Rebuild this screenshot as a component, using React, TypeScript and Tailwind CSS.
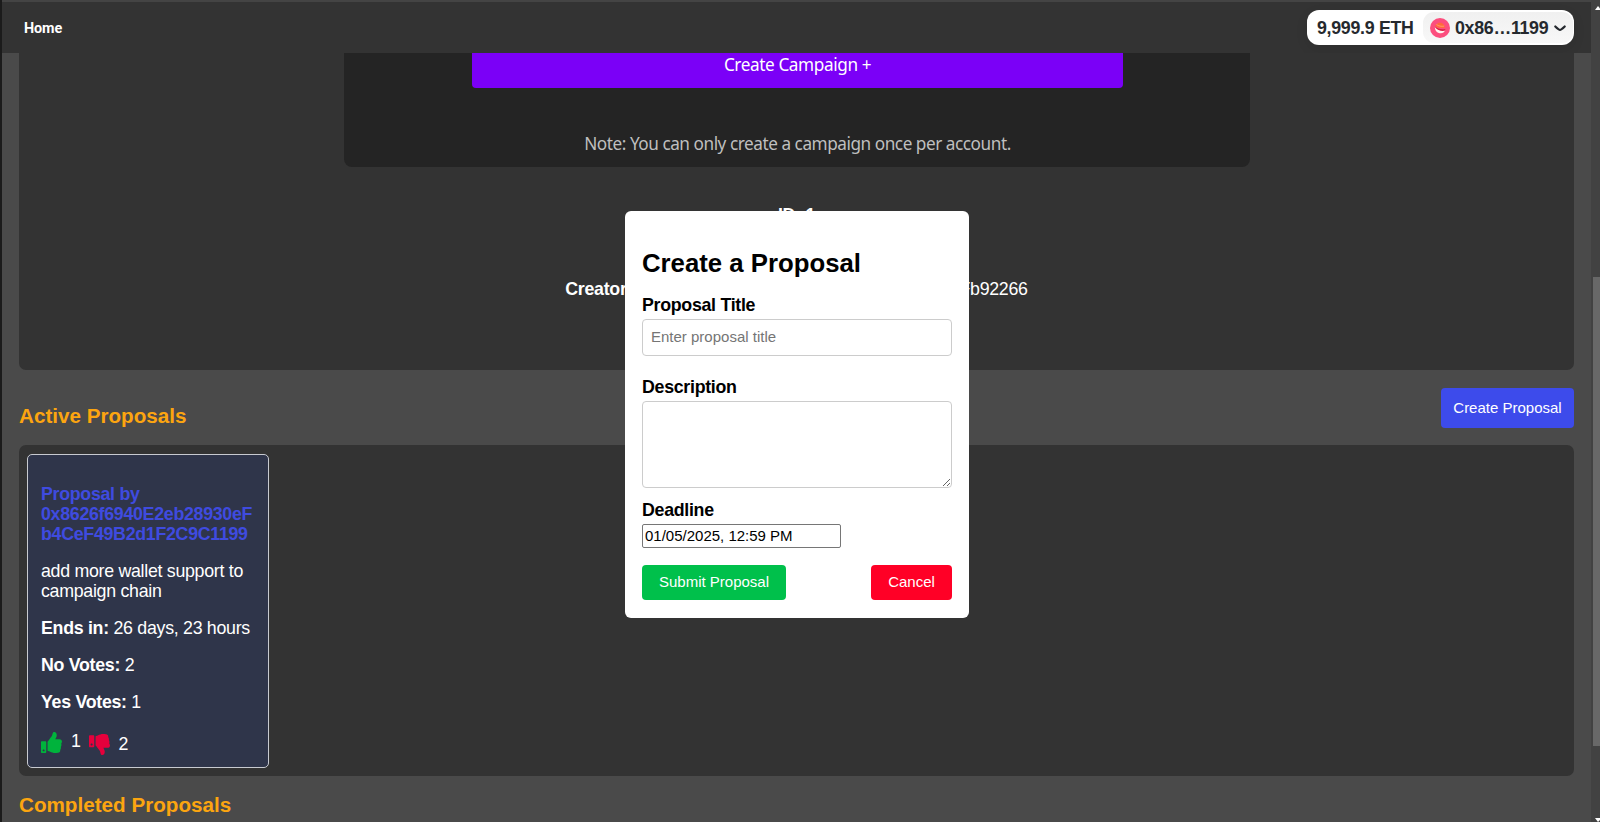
import React from "react";
import { FaThumbsUp, FaThumbsDown } from "react-icons/fa";

function Header() {
  return (
    <header className="flex h-[51px] shrink-0 items-center justify-between bg-[#333333] pl-[22px] pr-[17px]">
      <a className="mt-[3px] font-[Roboto] text-[14.4px] font-bold leading-4 tracking-[-0.1px] text-white">Home</a>
      <div className="flex h-[35px] items-center rounded-[12px] bg-white text-[17.8px] font-bold tracking-[-0.29px] text-[#25292e] shadow-[0_4px_12px_rgba(0,0,0,0.1)]">
        <span className="w-[116px] whitespace-nowrap pl-[10px] pt-px">9,999.9 ETH</span>
        <div className="mr-px flex h-[31px] w-[150px] items-center rounded-[11px] bg-linear-to-b from-[#f0f0f0] to-[#f8f8f8] pl-[7px]">
          <svg className="mr-[5px] size-5 shrink-0" viewBox="0 0 20 20">
            <circle cx="10" cy="10" r="10" fill="#fc4e7e" />
            <path d="M5 7.500 8.500 4.800c3-.8 6 1.300 6.700 4.700-3 1.300-8.200.5-10.200-2Z" fill="#ff6a3c" />
            <path d="M6.500 6.500c2 1.500 5 2.300 7.700 1.600" stroke="#ffa27a" strokeWidth=".8" fill="none" />
            <path d="M4.800 9.200c2.500 2.800 7 4 10.300 3-.8 2.600-3.500 3.600-6.300 2.700-2.300-.8-3.800-2.800-4-5.700Z" fill="#fff3ee" />
            <path d="M4.800 8.300c2.500 2.400 6.500 3.600 10.600 2.600l-.5 1.700c-4 1-8.200-.7-10.100-4.300Z" fill="#d81f45" />
          </svg>
          <span className="whitespace-nowrap pt-px">0x86…1199</span>
          <svg className="ml-[6px] mt-px shrink-0" width="12" height="7" viewBox="0 0 12 7" fill="none" stroke="#25292e" strokeWidth="2.200" strokeLinecap="round" strokeLinejoin="round">
            <path d="M1.300 1.500Q4.800 4.900 6 4.900T10.700 1.500" />
          </svg>
        </div>
      </div>
    </header>
  );
}

function CampaignPanel() {
  return (
    <section className="flex h-[317px] shrink-0 flex-col items-center rounded-b-[7px] bg-[#333333]">
      <div className="flex h-[114px] w-[906px] flex-col items-center rounded-b-[8px] bg-[#242424] pl-[2px] font-['Noto_Sans',sans-serif] text-[17.2px] tracking-[-0.46px]">
        <button className="h-[35px] w-[651px] rounded-b-[4px] bg-[#7b00f7] pb-[11px] leading-6 tracking-[-0.4px] text-white">Create Campaign +</button>
        <p className="mt-[44px] leading-6 text-[#bfbfbf]">Note: You can only create a campaign once per account.</p>
      </div>
      <h3 className="mt-[36px] font-bold leading-6 text-white">ID: 1</h3>
      <p className="mt-[52px] whitespace-nowrap leading-5 tracking-[-0.29px] text-white">
        <b>Creator:</b> 0xf39Fd6e51aad88F6F4ce6aB8827279cffFb92266
      </p>
    </section>
  );
}

function ProposalCard() {
  return (
    <article className="flex h-[314px] w-[242px] flex-col rounded-[5px] border border-[#c8cad0] bg-[#2f354a] pl-[13px] pr-[10px] pt-[30.400px] leading-[19.75px] text-white">
      <h4 className="break-all font-bold text-[#3f4be0]">
        <span className="block">Proposal by</span>
        <span className="block">0x8626f6940E2eb28930eF</span>
        <span className="block">b4CeF49B2d1F2C9C1199</span>
      </h4>
      <p className="mt-[17.200px]">add more wallet support to campaign chain</p>
      <p className="mt-[17.300px] whitespace-nowrap"><b>Ends in:</b> 26 days, 23 hours</p>
      <p className="mt-[17.500px]"><b>No Votes:</b> 2</p>
      <p className="mt-[17.500px]"><b>Yes Votes:</b> 1</p>
      <div className="mt-[19.500px] flex items-start">
        <FaThumbsUp className="size-[21px] text-[#00b33c]" />
        <span className="ml-[9px]">1</span>
        <FaThumbsDown className="ml-[8px] mt-[1.400px] size-[21px] text-[#e6003c]" />
        <span className="ml-[9px] mt-[3px]">2</span>
      </div>
    </article>
  );
}

function ProposalDialog() {
  return (
    <div role="dialog" className="absolute left-[623px] top-[211px] flex h-[406.500px] w-[344px] flex-col rounded-[6px] bg-white px-[17px] pt-[37px] text-black">
      <h2 className="text-[25.75px] font-bold leading-[30px] tracking-normal">Create a Proposal</h2>
      <label className="mt-[16.500px] font-bold leading-5">Proposal Title</label>
      <input placeholder="Enter proposal title" className="mt-[4px] h-[37px] shrink-0 rounded-[4px] border border-[#cccccc] px-[8px] pb-[1px] text-[15px] tracking-normal placeholder:text-[#757575]" />
      <label className="mt-[21.500px] font-bold leading-5">Description</label>
      <textarea className="mt-[4px] h-[87px] shrink-0 resize rounded-[4px] border border-[#cccccc]" />
      <label className="mt-[12px] font-bold leading-5">Deadline</label>
      <input defaultValue="01/05/2025, 12:59 PM" className="mt-[4px] h-[24px] w-[199px] shrink-0 rounded-[2px] border border-[#767676] px-[2px] pb-[2px] text-[15px] tracking-normal" />
      <div className="mt-[17px] flex justify-between text-[15px] tracking-normal text-white">
        <button className="h-[35px] w-[144px] rounded-[4px] bg-[#00c04b]">Submit Proposal</button>
        <button className="h-[35px] w-[81px] rounded-[4px] bg-[#ff0026]">Cancel</button>
      </div>
    </div>
  );
}

function Scrollbar() {
  return (
    <div className="flex w-[9px] shrink-0 flex-col items-end bg-[#424242]">
      <svg className="mt-[6px]" width="5" height="4" viewBox="0 0 5 4"><path d="M0 4 3 0 5 2.500V4Z" fill="#fff" /></svg>
      <div className="mt-[267px] h-[469px] w-[7px] bg-[#686868]" />
      <svg className="mb-0 mt-auto" width="5" height="4" viewBox="0 0 5 4"><path d="M0 0H5V2L3 4Z" fill="#fff" /></svg>
    </div>
  );
}

export default function App() {
  return (
    <div className="relative flex h-[822px] w-[1600px] overflow-hidden border-l-2 border-[#1b1b1b] bg-[#4a4a4a] font-['Liberation_Sans',Arial,sans-serif] text-[17.800px] tracking-[-0.290px]">
      <div className="flex min-w-0 flex-1 flex-col">
        <div className="h-[2px] shrink-0 bg-[#444444]" />
        <Header />
        <main className="flex flex-col pl-[17px] pr-[17px]">
          <CampaignPanel />
          <div className="flex h-[75px] shrink-0 justify-between">
            <h2 className="mt-[34px] text-[20.650px] font-bold leading-6 tracking-normal text-[#fca510]">Active Proposals</h2>
            <button className="mt-[18px] h-[40px] w-[133px] rounded-[4px] bg-[#3d4beb] text-[15px] tracking-normal text-white">Create Proposal</button>
          </div>
          <section className="h-[331px] shrink-0 rounded-[7px] bg-[#333333] px-[8px] pt-[9px]">
            <ProposalCard />
          </section>
          <h2 className="mt-[17px] text-[20.650px] font-bold leading-6 tracking-normal text-[#fca510]">Completed Proposals</h2>
        </main>
      </div>
      <Scrollbar />
      <ProposalDialog />
    </div>
  );
}
